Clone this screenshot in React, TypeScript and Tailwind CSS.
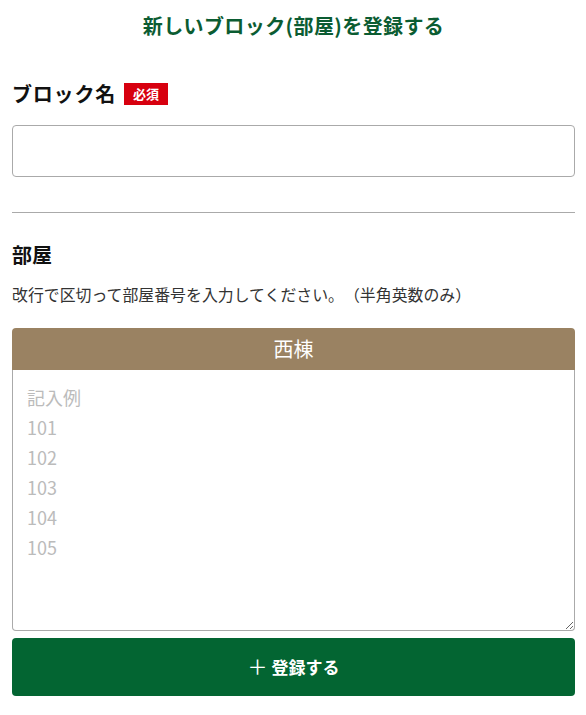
import React from "react";

export default function App() {
  const font = { fontFamily: '"Noto Sans CJK JP", "Noto Sans", sans-serif' };
  return (
    <div className="w-[586px] h-[715px] bg-white pl-3 pr-[11px] text-[#222] [text-spacing-trim:space-all]" style={font}>
      <h1 className="pt-[11px] text-center text-[20px] tracking-[0.4px] leading-[30px] font-bold text-[#0b5c32]">
        新しいブロック(部屋)を登録する
      </h1>
      <div className="mt-[41px] flex items-center h-[24px]">
        <span className="text-[20px] tracking-[0.8px] font-bold leading-[24px] text-[#111]">ブロック名</span>
        <span className="ml-[8px] w-[44px] h-[22px] bg-[#d7000f] text-white text-[13px] font-bold flex items-center justify-center">
          必須
        </span>
      </div>
      <input
        type="text"
        className="mt-[19px] block w-full h-[52px] border border-[#aaaaaa] rounded-[4px] px-3 outline-none"
      />
      <hr className="mt-[35px] border-0 border-t border-[#aaaaaa]" />
      <div className="mt-[30px] text-[20px] font-bold leading-[24px] text-[#111]">部屋</div>
      <p className="mt-[18px] text-[15.9px] leading-[20px] text-[#333]">
        改行で区切って部屋番号を入力してください。（半角英数のみ）
      </p>
      <div className="mt-[23px] h-[42px] bg-[#9a8262] rounded-t-[4px] flex items-center justify-center text-white text-[20px]">
        西棟
      </div>
      <textarea
        className="block w-full h-[261px] border border-[#aaaaaa] border-t-0 rounded-b-[4px] pl-[14px] pt-[12px] text-[18px] leading-[30px] outline-none placeholder:text-[#bbbbbb]"
        placeholder={"記入例\n101\n102\n103\n104\n105"}
      />
      <button className="mt-[7px] w-full h-[58px] bg-[#036532] rounded-[4px] text-white text-[17px] font-bold flex items-center justify-center">
        <span className="font-normal text-[20px] mr-[4px]">＋</span>登録する
      </button>
    </div>
  );
}
